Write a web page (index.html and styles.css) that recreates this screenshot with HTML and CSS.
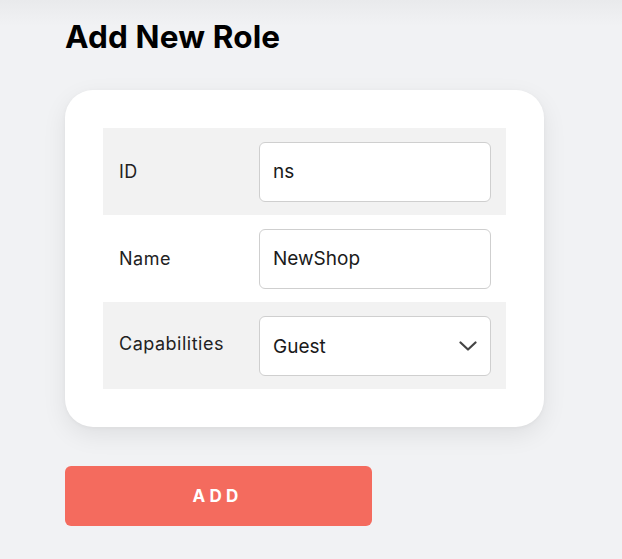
FILE: index.html
```html
<!DOCTYPE html>
<html>
<head>
<meta charset="utf-8">
<link rel="stylesheet" href="styles.css">
</head>
<body>
<main class="page">
  <h1 class="title">Add New Role</h1>
  <section class="card">
    <div class="form-table">
      <div class="row shaded">
        <label class="label">ID</label>
        <div class="field"><span class="value">ns</span></div>
      </div>
      <div class="row">
        <label class="label">Name</label>
        <div class="field"><span class="value">NewShop</span></div>
      </div>
      <div class="row shaded">
        <label class="label label-up">Capabilities</label>
        <div class="field select">
          <span class="value">Guest</span>
          <svg class="chev" width="18" height="10" viewBox="0 0 18 10"><path d="M1.5 1.5 L9 8.5 L16.5 1.5" fill="none" stroke="#444" stroke-width="2.2" stroke-linecap="round" stroke-linejoin="round"/></svg>
        </div>
      </div>
    </div>
  </section>
  <button class="add-btn">ADD</button>
</main>
</body>
</html>
```
FILE: styles.css
```css
* { box-sizing: border-box; }
html, body { margin: 0; padding: 0; }
body {
  width: 622px;
  height: 559px;
  overflow: hidden;
  font-family: Inter, "Noto Sans", sans-serif;
  color: #1a1a1a;
  background: linear-gradient(180deg, #e9eaec 0px, #f1f2f4 26px, #f1f2f4 100%);
}
.page {
  padding: 18px 0 0 65px;
}
.title {
  margin: 0;
  font-size: 31.5px;
  font-weight: 700;
  letter-spacing: 0.15px;
  line-height: 38px;
  color: #000;
}
.card {
  margin-top: 34px;
  width: 479px;
  background: #fff;
  border-radius: 28px;
  padding: 38px 38px 38px 38px;
  box-shadow: 0 8px 24px rgba(0,0,0,0.08), 0 1px 4px rgba(0,0,0,0.04);
}
.form-table {
  display: flex;
  flex-direction: column;
}
.row {
  display: flex;
  align-items: center;
  height: 87px;
  padding: 0 15px 0 16px;
}
.row.shaded { background: #f2f2f2; }
.label {
  width: 140px;
  font-size: 18px;
  letter-spacing: 0.5px;
  color: #222;
}
.label-up { margin-top: -5px; }
.field {
  flex: 1;
  height: 60px;
  background: #fff;
  border: 1.5px solid #cfcfcf;
  border-radius: 6px;
  display: flex;
  align-items: center;
  padding: 0 13px;
  font-size: 19px;
  color: #1a1a1a;
}
.select { justify-content: space-between; padding-right: 13px; }
.select .value { margin-top: 2px; }
.chev { display: block; margin-top: 1px; }
.add-btn {
  margin-top: 39px;
  width: 307px;
  height: 60px;
  border: none;
  border-radius: 6px;
  background: #f46b5e;
  color: #fff;
  font-family: Inter, "Noto Sans", sans-serif;
  font-size: 17px;
  font-weight: 700;
  letter-spacing: 4.3px;
  padding-left: 4px;
}
```
